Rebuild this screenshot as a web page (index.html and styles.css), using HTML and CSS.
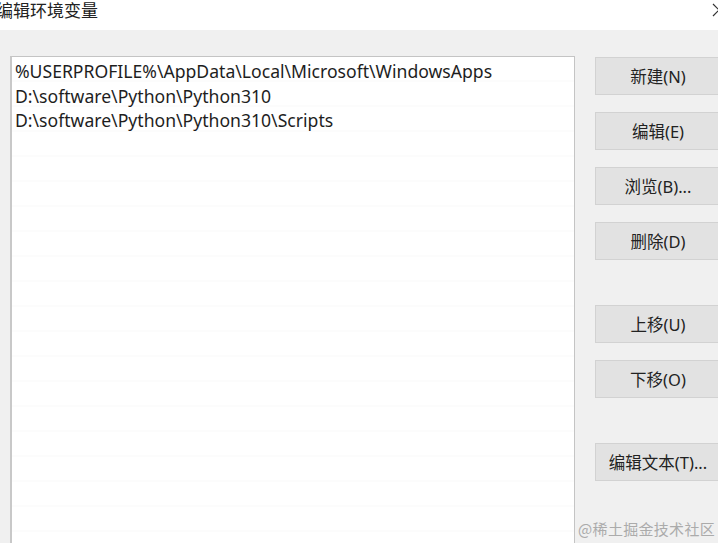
FILE: index.html
```html
<!DOCTYPE html>
<html lang="zh-CN">
<head>
<meta charset="utf-8">
<title>编辑环境变量</title>
<link rel="stylesheet" href="styles.css">
</head>
<body>
<div class="window">
  <div class="titlebar">
    <span class="title">编辑环境变量</span>
    <svg class="close" width="14" height="14" viewBox="0 0 14 14"><path d="M1 1 L13 13 M13 1 L1 13" stroke="#333" stroke-width="1.2" fill="none"/></svg>
  </div>
  <div class="main">
    <div class="list">
      <div class="row">%USERPROFILE%\AppData\Local\Microsoft\WindowsApps</div>
      <div class="row">D:\software\Python\Python310</div>
      <div class="row">D:\software\Python\Python310\Scripts</div>
    </div>
    <div class="buttons">
      <div class="btn">新建(N)</div>
      <div class="btn">编辑(E)</div>
      <div class="btn">浏览(B)...</div>
      <div class="btn">删除(D)</div>
      <div class="btn spaced">上移(U)</div>
      <div class="btn">下移(O)</div>
      <div class="btn spaced">编辑文本(T)...</div>
    </div>
  </div>
  <div class="watermark">@稀土掘金技术社区</div>
</div>
</body>
</html>
```

FILE: styles.css
```css
html, body {
  margin: 0;
  padding: 0;
  background: #f0f0f0;
}
.window {
  position: relative;
  width: 718px;
  height: 543px;
  overflow: hidden;
  display: flex;
  flex-direction: column;
  font-family: "Noto Sans", "Noto Sans CJK SC", sans-serif;
  color: #1a1a1a;
}
.titlebar {
  height: 30px;
  flex: none;
  background: #ffffff;
  display: flex;
  justify-content: space-between;
  align-items: flex-start;
}
.title {
  margin-left: -4px;
  font-family: "Noto Sans CJK SC", sans-serif;
  font-size: 17px;
  line-height: 20px;
  color: #222;
}
.close {
  margin-top: 3px;
  margin-right: -8px;
}
.main {
  flex: 1;
  display: flex;
  padding: 26px 0 0 10px;
  gap: 20px;
  background: #f0f0f0;
}
.list {
  width: 559px;
  flex: none;
  background-color: #ffffff;
  background-image: repeating-linear-gradient(to bottom, transparent 0px, transparent 23px, #fcfcfc 23px, #fcfcfc 25px);
  border: 1px solid #c4c4c4;
  border-left: 2px solid #c8c8c8;
  border-bottom: none;
  padding: 2px 0 0 3px;
  font-size: 17.6px;
  line-height: 24.5px;
  color: #1e1e1e;
}
.row {
  white-space: nowrap;
}
.buttons {
  display: flex;
  flex-direction: column;
  gap: 17px;
  padding-top: 1px;
}
.btn {
  width: 124px;
  height: 36px;
  background: #e2e2e2;
  border: 1px solid #d2d2d2;
  display: flex;
  align-items: center;
  justify-content: center;
  font-family: "Noto Sans", "Noto Sans CJK SC", sans-serif;
  font-size: 16.5px;
  color: #222;
}
.btn.spaced {
  margin-top: 28px;
}
.watermark {
  position: absolute;
  right: 3px;
  bottom: 4px;
  font-family: "Noto Sans CJK SC", sans-serif;
  font-size: 15px;
  line-height: 20px;
  color: #ababab;
  letter-spacing: 0.3px;
}
```
